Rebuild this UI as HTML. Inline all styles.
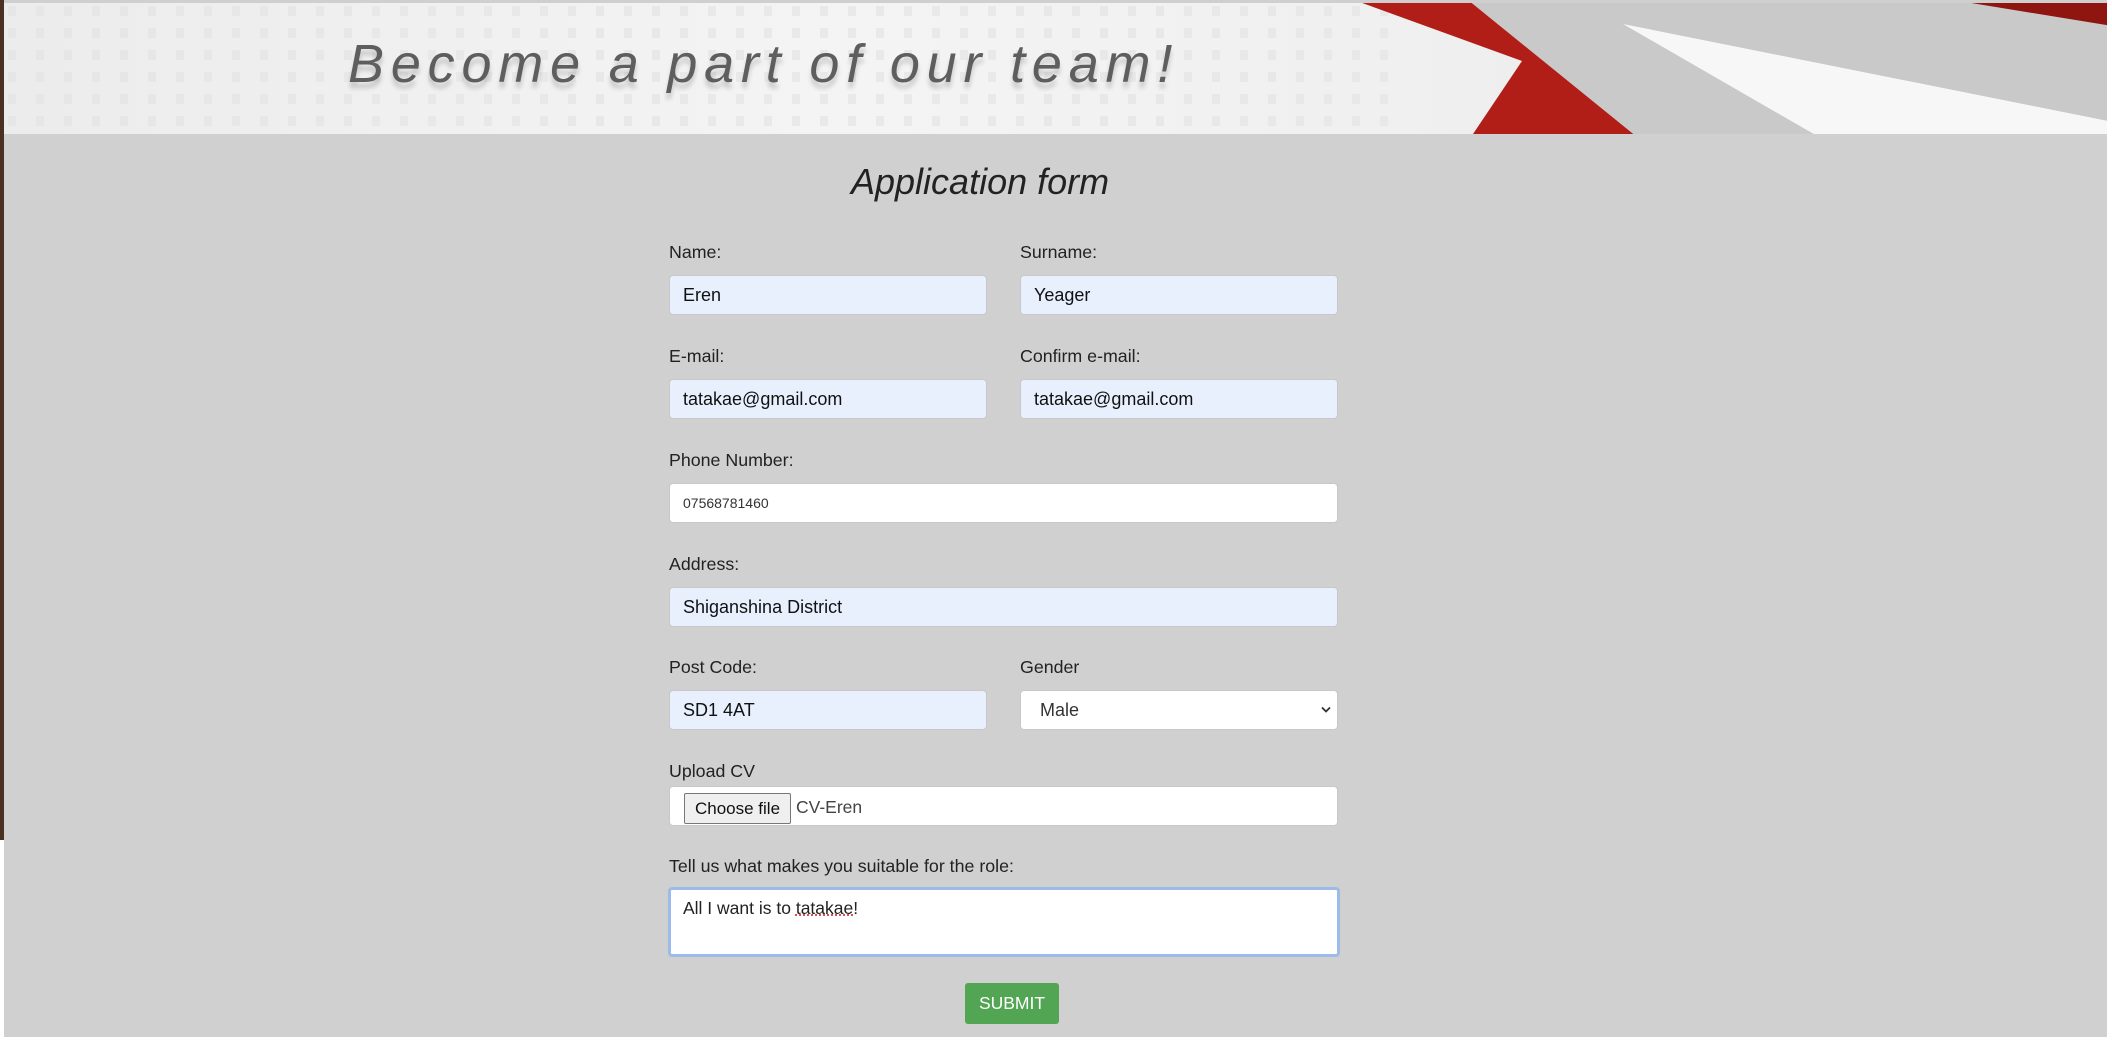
<!DOCTYPE html>
<html><head><meta charset="utf-8"><style>
*{box-sizing:border-box;margin:0;padding:0}
body{width:2112px;height:1044px;position:relative;overflow:hidden;background:#fff;font-family:"Liberation Sans",sans-serif;color:#222}
.gray{position:absolute;left:4px;top:134px;width:2103px;height:903px;background:#d0d0d0}
.lstrip{position:absolute;left:0;top:0;width:4px;height:840px;background:#4a3222}
.banner{position:absolute;left:4px;top:0;width:2103px;height:134px;border-top:3px solid #cfcfcf;background:linear-gradient(90deg,#ececec,#f4f4f4 40%,#efefef 70%,#e4e4e4);overflow:hidden}
.btext{position:absolute;left:344px;top:30px;font-size:54px;font-style:italic;letter-spacing:6.8px;color:#5e5e5e;text-shadow:0 6px 5px rgba(0,0,0,.18);white-space:nowrap}
.abs{position:absolute}
.lbl{position:absolute;font-size:17.8px;color:#222;line-height:20px}
.inp{position:absolute;height:40px;border:1px solid #c8c8c8;border-radius:4px;background:#e8f0fe;font-size:18px;line-height:38px;padding-left:13px;color:#111}
.w{background:#fff}
h1{position:absolute;left:851px;top:162px;font-size:36px;font-style:italic;font-weight:normal;color:#222;line-height:40px}
</style></head><body>
<div class="lstrip"></div>
<div class="banner">
<svg class="abs" style="left:-4px;top:-3px" width="2112" height="137">
<defs><pattern id="d" width="28" height="22" patternUnits="userSpaceOnUse"><rect x="8" y="6" width="8" height="10" fill="#e2e2e2"/></pattern></defs>
<rect x="0" y="0" width="1400" height="137" fill="url(#d)" opacity="0.6"/>
<polygon points="1468,0 2112,0 2112,137 1637,137" fill="#c9c9c9"/>
<polygon points="1354,0 1468,0 1637,137 1471,137 1522,61" fill="#b01e17"/>
<polygon points="1623,24 2108,121 2108,137 1819,137" fill="#f7f7f7"/>
<polygon points="1953,0 2112,0 2112,26" fill="#8e1510"/>
</svg>
<div class="btext">Become a part of our team!</div>
</div>
<div class="gray"></div>
<h1>Application form</h1>

<div class="lbl" style="left:669px;top:242px">Name:</div>
<div class="lbl" style="left:1020px;top:242px">Surname:</div>
<div class="inp" style="left:669px;top:275px;width:318px">Eren</div>
<div class="inp" style="left:1020px;top:275px;width:318px">Yeager</div>

<div class="lbl" style="left:669px;top:346px">E-mail:</div>
<div class="lbl" style="left:1020px;top:346px">Confirm e-mail:</div>
<div class="inp" style="left:669px;top:379px;width:318px">tatakae@gmail.com</div>
<div class="inp" style="left:1020px;top:379px;width:318px">tatakae@gmail.com</div>

<div class="lbl" style="left:669px;top:450px">Phone Number:</div>
<div class="inp w" style="left:669px;top:483px;width:669px;font-size:14px;color:#333">07568781460</div>

<div class="lbl" style="left:669px;top:554px">Address:</div>
<div class="inp" style="left:669px;top:587px;width:669px">Shiganshina District</div>

<div class="lbl" style="left:669px;top:657px">Post Code:</div>
<div class="lbl" style="left:1020px;top:657px">Gender</div>
<div class="inp" style="left:669px;top:690px;width:318px">SD1 4AT</div>
<div class="inp w" style="left:1020px;top:690px;width:318px;color:#333;padding-left:19px">Male
<svg class="abs" style="right:6px;top:15px" width="10" height="8"><path d="M1 1.5 L5 5.5 L9 1.5" stroke="#333" stroke-width="1.8" fill="none"/></svg></div>

<div class="lbl" style="left:669px;top:761px">Upload CV</div>
<div class="inp w" style="left:669px;top:786px;width:669px;padding-left:14px;font-size:17.5px;color:#444">
<span class="abs" style="left:14px;top:6px;width:107px;height:31px;border:1px solid #777;border-radius:2px;background:#efefef;color:#111;font-size:17px;line-height:29px;text-align:center">Choose file</span>
<span class="abs" style="left:126px;top:1px">CV-Eren</span></div>

<div class="lbl" style="left:669px;top:856px">Tell us what makes you suitable for the role:</div>
<div class="abs" style="left:668px;top:887px;width:672px;height:70px;border:3px solid #9dbbe8;border-radius:4px;background:#fff;font-size:17.5px;padding:8px 12px;color:#222">All I want is to <span style="text-decoration:underline dotted #d33">tatakae</span>!</div>

<div class="abs" style="left:965px;top:983px;width:94px;height:41px;background:#52a552;border-radius:3px;color:#fff;font-size:17.5px;line-height:41px;text-align:center">SUBMIT</div>
</body></html>
